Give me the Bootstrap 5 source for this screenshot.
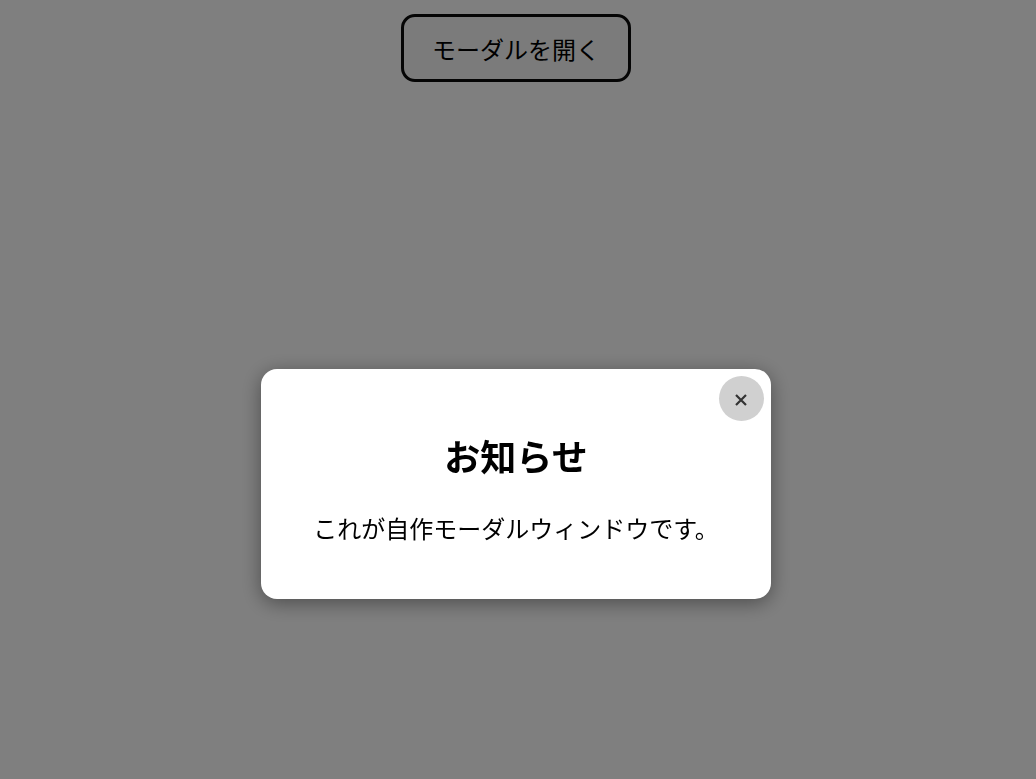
<!DOCTYPE html>
<html lang="ja"><head><meta charset="utf-8">
<link href="https://cdn.jsdelivr.net/npm/bootstrap@5.3.0/dist/css/bootstrap.min.css" rel="stylesheet">
<style>
html,body{height:100%}
body{background:#fff;font-family:"Liberation Sans","Noto Sans CJK JP",sans-serif;color:#000;margin:0;overflow:hidden}
.top-row{padding-right:4px}
.opener{margin-top:14px;width:230px;height:68px;border:3px solid #0a0a0a;border-radius:14px;background:#f6f6f6;font-size:24px;color:#000;padding:6px 0 0}
.veil{position:fixed;inset:0;background:rgba(0,0,0,.5)}
.dlg-wrap{position:fixed;inset:0;padding-top:369px;padding-right:4px}
.dlg{position:relative;width:510px;height:230px;background:#fff;border-radius:16px;box-shadow:0 4px 20px rgba(0,0,0,.4);padding:65px 20px 0}
.dlg h2{font-size:36px;font-weight:700;line-height:48px;margin:1px 0 27px;text-align:center}
.dlg p{font-size:24px;line-height:40px;margin:0;text-align:center}
.shut{position:absolute;top:7px;right:7px;width:45px;height:45px;border:0;border-radius:50%;background:#d0d0d0;color:#333;padding:0;display:flex;align-items:center;justify-content:center}
.shut svg{width:12px;height:12px;margin:3px 1px 0 0}
</style></head>
<body>
<div class="top-row d-flex justify-content-center"><button class="opener" type="button">モーダルを開く</button></div>
<div class="veil"></div>
<div class="dlg-wrap d-flex justify-content-center align-items-start">
<div class="dlg">
<button class="shut" type="button" aria-label="閉じる"><svg viewBox="0 0 12 12"><path d="M1 1 11 11M11 1 1 11" stroke="#333" stroke-width="2.2" fill="none"/></svg></button>
<h2>お知らせ</h2>
<p>これが自作モーダルウィンドウです。</p>
</div></div>
<script src="https://cdn.jsdelivr.net/npm/bootstrap@5.3.0/dist/js/bootstrap.bundle.min.js"></script>
</body></html>
